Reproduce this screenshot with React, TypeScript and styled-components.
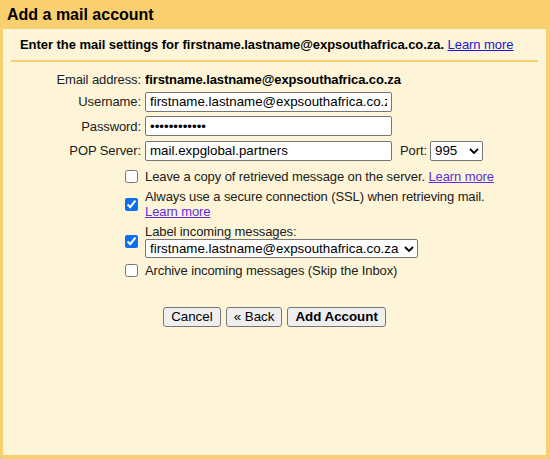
import React from "react";
import styled, { createGlobalStyle } from "styled-components";

const GlobalStyle = createGlobalStyle`
  html, body { margin: 0; padding: 0; background: #c2c6d2; }
  body {
    font-family: "Liberation Sans", Arial, sans-serif;
    font-size: 13px;
    color: #202020;
    letter-spacing: -0.1px;
  }
  #root { width: 550px; height: 459px; }
`;

const Frame = styled.div`
  width: 550px;
  height: 459px;
  box-sizing: border-box;
  background: #f9cf6f;
  display: flex;
  flex-direction: column;
  border-radius: 0 0 4px 4px;
  padding: 0 4px 4px 3px;
`;

const Title = styled.h1`
  margin: 0;
  height: 29px;
  box-sizing: border-box;
  padding: 6px 0 0 4px;
  font-size: 16px;
  font-weight: bold;
  color: #000;
  line-height: normal;
  letter-spacing: 0;
`;

const Panel = styled.div`
  flex: 1;
  background: #fef5d8;
  display: flex;
  flex-direction: column;
`;

const Intro = styled.p`
  margin: 0;
  padding: 8px 0 0 17px;
  line-height: 15px;
  font-weight: bold;
  color: #000;
  letter-spacing: -0.05px;
`;

const Link = styled.a<{ $visited?: boolean; $block?: boolean }>`
  color: ${(p) => (p.$visited ? "#5b2fe0" : "#1717d6")};
  text-decoration: underline;
  font-weight: normal;
  cursor: pointer;
  display: ${(p) => (p.$block ? "block" : "inline")};
`;

const Rule = styled.div`
  margin: 8px 8px 0;
  height: 2px;
  background: #f9cf6f;
`;

const Grid = styled.div<{ $gap: number; $top: number }>`
  display: grid;
  grid-template-columns: 138px 1fr;
  column-gap: 4px;
  row-gap: ${(p) => p.$gap}px;
  margin-top: ${(p) => p.$top}px;
  align-items: center;
`;

const Label = styled.label`
  text-align: right;
  line-height: 15px;
  white-space: nowrap;
`;

const Value = styled.div`
  line-height: 15px;
  font-weight: bold;
  color: #000;
`;

const TextInput = styled.input`
  width: 247px;
  height: 20px;
  box-sizing: border-box;
  border: 1px solid #767676;
  border-radius: 2px;
  padding: 0 4px;
  margin: 0;
  font-family: "Liberation Sans", Arial, sans-serif;
  font-size: 13.333px;
  letter-spacing: 0;
  color: #000;
  background: #fff;
  outline: none;
`;

const InlineRow = styled.div`
  display: flex;
  align-items: center;
`;

const PortLabel = styled.label`
  margin: 0 3px 0 8px;
  line-height: 15px;
`;

const SelectWrap = styled.div<{ $width: number; $height: number }>`
  position: relative;
  width: ${(p) => p.$width}px;
  height: ${(p) => p.$height}px;
`;

const Select = styled.select`
  appearance: none;
  -webkit-appearance: none;
  width: 100%;
  height: 100%;
  box-sizing: border-box;
  border: 1px solid #767676;
  border-radius: 2px;
  padding: 0 16px 0 4px;
  margin: 0;
  font-family: "Liberation Sans", Arial, sans-serif;
  font-size: 13.333px;
  letter-spacing: 0;
  color: #000;
  background: #fff;
  outline: none;
`;

const Chevron = styled.svg`
  position: absolute;
  right: 4px;
  top: 50%;
  margin-top: -3px;
  pointer-events: none;
`;

const CheckCell = styled.div`
  justify-self: end;
  margin-right: 3px;
  display: flex;
`;

const Check = styled.input`
  width: 13px;
  height: 13px;
  margin: 0;
  accent-color: #0b6ff0;
`;

const OptionText = styled.div`
  line-height: 15px;
`;

const Buttons = styled.div`
  display: flex;
  justify-content: center;
  gap: 5px;
  margin-top: 29px;
`;

const Button = styled.button<{ $primary?: boolean }>`
  height: 20px;
  box-sizing: border-box;
  padding: 0 7px;
  margin: 0;
  border: 1px solid #767676;
  border-radius: 3px;
  background: #efefef;
  font-family: "Liberation Sans", Arial, sans-serif;
  font-size: 13.333px;
  letter-spacing: 0;
  font-weight: ${(p) => (p.$primary ? "bold" : "normal")};
  color: #000;
  line-height: 18px;
`;

const ChevronIcon = () => (
  <Chevron width="10" height="6" viewBox="0 0 10 6">
    <path d="M1 1L5 5L9 1" stroke="#000" strokeWidth="1.8" fill="none" />
  </Chevron>
);

const email = "firstname.lastname@expsouthafrica.co.za";

export default function App() {
  return (
    <>
      <GlobalStyle />
      <Frame>
        <Title>Add a mail account</Title>
        <Panel>
          <Intro>
            Enter the mail settings for {email}. <Link>Learn more</Link>
          </Intro>
          <Rule />
          <Grid $gap={4.5} $top={10}>
            <Label>Email address:</Label>
            <Value>{email}</Value>
            <Label>Username:</Label>
            <div>
              <TextInput defaultValue={email} />
            </div>
            <Label>Password:</Label>
            <div>
              <TextInput type="password" defaultValue="abcdefghijkl" />
            </div>
            <Label>POP Server:</Label>
            <InlineRow>
              <TextInput defaultValue="mail.expglobal.partners" />
              <PortLabel>Port:</PortLabel>
              <SelectWrap $width={53} $height={20}>
                <Select defaultValue="995">
                  <option value="110">110</option>
                  <option value="995">995</option>
                </Select>
                <ChevronIcon />
              </SelectWrap>
            </InlineRow>
          </Grid>
          <Grid $gap={5} $top={8.5}>
            <CheckCell>
              <Check type="checkbox" />
            </CheckCell>
            <OptionText>
              Leave a copy of retrieved message on the server.{" "}
              <Link $visited>Learn more</Link>
            </OptionText>
            <CheckCell>
              <Check type="checkbox" defaultChecked />
            </CheckCell>
            <OptionText>
              Always use a secure connection (SSL) when retrieving mail.
              <Link $visited $block>
                Learn more
              </Link>
            </OptionText>
            <CheckCell>
              <Check type="checkbox" defaultChecked />
            </CheckCell>
            <div>
              <OptionText>Label incoming messages:</OptionText>
              <SelectWrap $width={273} $height={19}>
                <Select defaultValue={email}>
                  <option value={email}>{email}</option>
                </Select>
                <ChevronIcon />
              </SelectWrap>
            </div>
            <CheckCell>
              <Check type="checkbox" />
            </CheckCell>
            <OptionText>Archive incoming messages (Skip the Inbox)</OptionText>
          </Grid>
          <Buttons>
            <Button>Cancel</Button>
            <Button>« Back</Button>
            <Button $primary>Add Account</Button>
          </Buttons>
        </Panel>
      </Frame>
    </>
  );
}
